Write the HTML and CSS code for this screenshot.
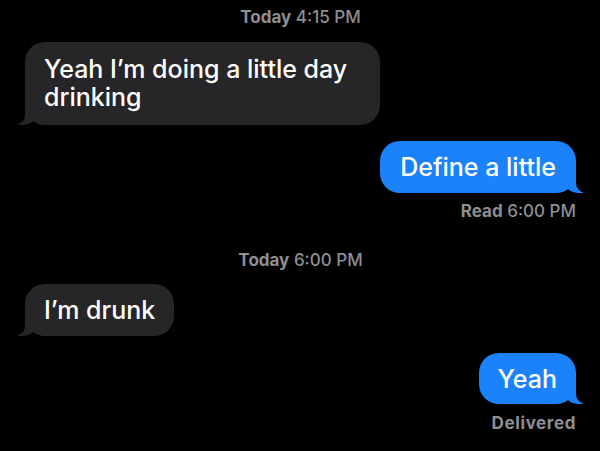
FILE: index.html
```html
<!DOCTYPE html>
<html lang="en">
<head>
<meta charset="utf-8">
<title>Messages</title>
<link rel="stylesheet" href="styles.css">
</head>
<body>
<main class="thread">
  <div class="stamp stamp-first"><b>Today</b> 4:15 PM</div>
  <div class="bubble them b1">Yeah I’m doing a little day drinking</div>
  <div class="bubble me b2">Define a little</div>
  <div class="status status-read"><b>Read</b> 6:00 PM</div>
  <div class="stamp stamp-second"><b>Today</b> 6:00 PM</div>
  <div class="bubble them b3">I’m drunk</div>
  <div class="bubble me b4">Yeah</div>
  <div class="status status-delivered"><b>Delivered</b></div>
</main>
</body>
</html>
```

FILE: styles.css
```css
html, body {
  margin: 0;
  padding: 0;
  background: #000;
  width: 600px;
  height: 451px;
  overflow: hidden;
}

.thread {
  display: flex;
  flex-direction: column;
  padding: 7px 24px 0 25px;
  font-family: Inter, "Noto Sans", sans-serif;
  -webkit-font-smoothing: antialiased;
}

.stamp {
  align-self: center;
  color: #8e8e93;
  font-size: 17px;
  line-height: 20px;
  font-weight: 500;
}
.stamp b, .status b { font-weight: 700; }

.stamp-second { margin-top: 30px; }

.status {
  align-self: flex-end;
  color: #8e8e93;
  font-size: 17px;
  line-height: 18px;
  font-weight: 500;
}
.status-read { margin-top: 9px; }
.status-delivered { margin-top: 10px; letter-spacing: 0.6px; }

.bubble {
  position: relative;
  color: #fff;
  font-size: 25px;
  line-height: 28px;
  font-weight: 500;
  padding: 12px 19px;
  border-radius: 20px;
  max-width: 317px;
}

.them {
  align-self: flex-start;
  background: #262629;
}
.me {
  align-self: flex-end;
  background: #1b82fb;
}

.them::before, .them::after,
.me::before, .me::after {
  content: "";
  position: absolute;
  bottom: 0;
  height: 20px;
}
.them::before {
  left: -7px;
  width: 20px;
  background: #262629;
  border-bottom-right-radius: 15px;
}
.them::after {
  left: -26px;
  width: 26px;
  background: #000;
  border-bottom-right-radius: 10px;
}
.me::before {
  right: -7px;
  width: 20px;
  background: #1b82fb;
  border-bottom-left-radius: 15px;
}
.me::after {
  right: -26px;
  width: 26px;
  background: #000;
  border-bottom-left-radius: 10px;
}

.b1 { margin-top: 15px; padding-top: 13px; padding-bottom: 14px; }
.b2 { margin-top: 16px; padding-left: 20px; padding-right: 20px; }
.b3 { margin-top: 14px; }
.b4 { margin-top: 17px; padding-bottom: 11px; }
```
